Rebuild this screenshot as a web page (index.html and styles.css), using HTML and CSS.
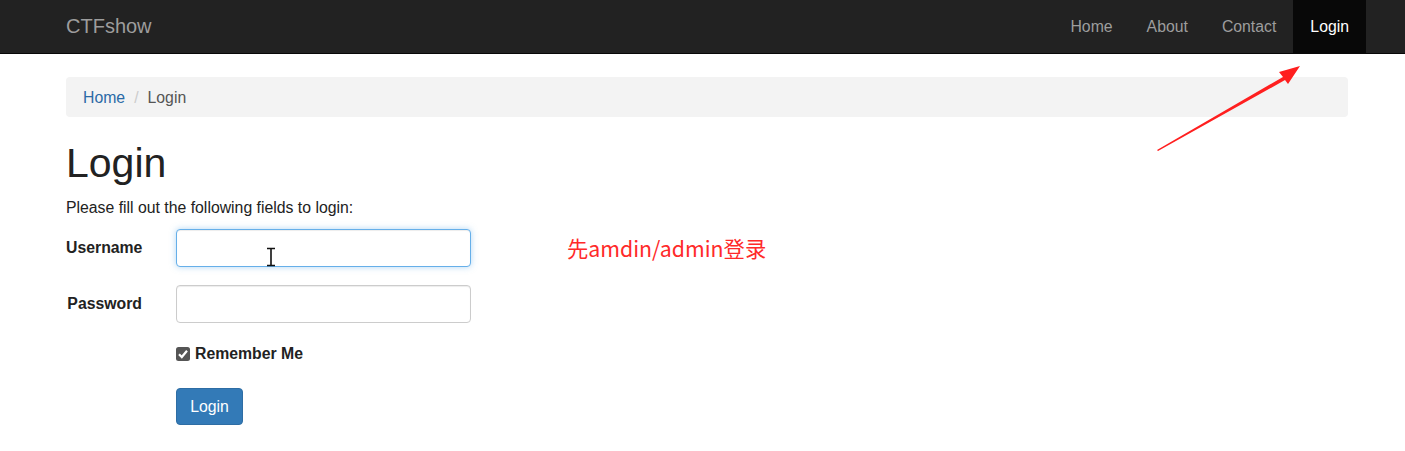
FILE: index.html
```html
<!DOCTYPE html>
<html lang="en">
<head>
<meta charset="utf-8">
<title>Login</title>
<link rel="stylesheet" href="styles.css">
</head>
<body>
<nav class="navbar">
  <div class="nav-inner">
    <a class="brand" href="#">CTFshow</a>
    <ul class="nav">
      <li><a href="#">Home</a></li>
      <li><a href="#">About</a></li>
      <li><a href="#">Contact</a></li>
      <li class="active"><a href="#">Login</a></li>
    </ul>
  </div>
</nav>
<main class="container">
  <ol class="breadcrumb">
    <li><a href="#">Home</a></li>
    <li class="sep">/</li>
    <li class="current">Login</li>
  </ol>
  <h1 class="title">Login</h1>
  <p class="lead">Please fill out the following fields to login:</p>
  <div class="form-area">
    <form class="form">
      <div class="row">
        <label class="label">Username</label>
        <div class="field"><input class="input focus" type="text"></div>
      </div>
      <div class="row">
        <label class="label label-pw">Password</label>
        <div class="field"><input class="input" type="password"></div>
      </div>
      <div class="row row-check">
        <label class="check"><span class="box"><svg viewBox="0 0 14 14" width="14" height="14"><rect x="0" y="0" width="14" height="14" rx="2.5" fill="#555"/><path d="M3 7.2 L5.8 10 L11 3.8" fill="none" stroke="#fff" stroke-width="2.2"/></svg></span>Remember Me</label>
      </div>
      <div class="row row-btn">
        <button class="btn" type="button">Login</button>
      </div>
    </form>
    <div class="note">先amdin/admin登录</div>
  </div>
</main>
<svg class="cursor" width="12" height="20" viewBox="0 0 12 20"><path d="M2 1.5 H10 M6 1.5 V18.5 M2 18.5 H10" stroke="#111" stroke-width="1.6" fill="none"/></svg>
<svg class="arrow" width="160" height="100" viewBox="0 0 160 100">
  <polygon points="0,92 126,19 122,14 143,8 131,26 128,22 1,93" fill="#ff1f1f"/>
</svg>
</body>
</html>
```

FILE: styles.css
```css
html, body {
  margin: 0;
  padding: 0;
  background: #fff;
}
body {
  font-family: "Liberation Sans", Arial, sans-serif;
  font-size: 15.8px;
  color: #333;
  position: relative;
  height: 451px;
  overflow: hidden;
}
a { text-decoration: none; }

.navbar {
  background: #222;
  border-bottom: 1px solid #080808;
  height: 53px;
}
.nav-inner {
  display: flex;
  justify-content: space-between;
  align-items: stretch;
  height: 53px;
  padding-left: 66px;
  width: 1300px;
}
.brand {
  color: #9d9d9d;
  font-size: 20px;
  line-height: 53px;
}
.nav {
  list-style: none;
  margin: 0;
  padding: 0;
  display: flex;
}
.nav li a {
  display: block;
  color: #9d9d9d;
  font-size: 15.8px;
  line-height: 53px;
  padding: 0 17px;
}
.nav li.active a {
  background: #080808;
  color: #fff;
}

.container {
  padding-left: 66px;
  width: 1282px;
}
.breadcrumb {
  list-style: none;
  margin: 23px 0 0;
  padding: 1px 17px 0;
  box-sizing: border-box;
  height: 40px;
  background: #f3f3f3;
  border-radius: 4px;
  display: flex;
  align-items: center;
  gap: 9px;
}
.breadcrumb a { color: #2a6aa6; }
.breadcrumb .sep { color: #ccc; }
.breadcrumb .current { color: #555; }

.title {
  font-size: 41px;
  font-weight: 500;
  color: #222;
  margin: 22px 0 0;
  line-height: 48px;
}
.lead {
  margin: 12px 0 0;
  color: #222;
}

.form-area {
  display: flex;
  align-items: flex-start;
  margin-top: 12px;
}
.form {
  width: 405px;
}
.row {
  display: flex;
  align-items: center;
  height: 38px;
  margin-bottom: 18px;
}
.label {
  width: 76px;
  text-align: right;
  font-weight: bold;
  color: #222;
  margin-right: 34px;
}
.input {
  box-sizing: border-box;
  width: 295px;
  height: 38px;
  border: 1px solid #ccc;
  border-radius: 4px;
  box-shadow: inset 0 1px 1px rgba(0,0,0,.075);
  outline: none;
  margin: 0;
}
.input.focus {
  border-color: #66afe9;
  box-shadow: inset 0 1px 1px rgba(0,0,0,.075), 0 0 6px rgba(102,175,233,.5);
}
.row-check {
  padding-left: 110px;
  height: 22px;
  margin-top: 20px;
  margin-bottom: 0;
}
.check {
  display: flex;
  align-items: center;
  font-weight: bold;
  color: #222;
}
.box { display: flex; margin-right: 5px; }
.row-btn {
  padding-left: 110px;
  height: 37px;
  margin-top: 23px;
}
.btn {
  font-family: "Liberation Sans", Arial, sans-serif;
  font-size: 15.8px;
  color: #fff;
  background: #337ab7;
  border: 1px solid #2e6da4;
  border-radius: 4px;
  height: 37px;
  width: 67px;
  padding: 0;
}
.note {
  margin-left: 96px;
  margin-top: 3px;
  font-family: "Noto Sans CJK SC", "Noto Sans", sans-serif;
  font-size: 21.3px;
  color: #ff2a2a;
}

.cursor {
  position: absolute;
  left: 265px;
  top: 247px;
}
.arrow {
  position: absolute;
  left: 1157px;
  top: 58px;
}
```
